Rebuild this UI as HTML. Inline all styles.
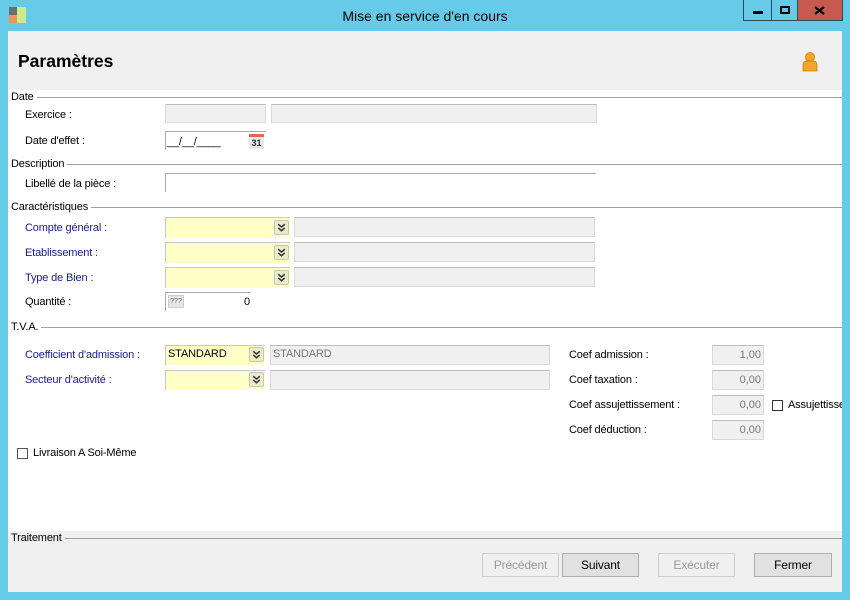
<!DOCTYPE html>
<html><head><meta charset="utf-8"><style>
*{margin:0;padding:0;box-sizing:border-box}
body{width:850px;height:600px;background:#66cbe8;position:relative;overflow:hidden;font-family:"Liberation Sans",sans-serif;font-size:11px;color:#000}
.a{position:absolute}
.l{position:absolute;white-space:nowrap;line-height:13px;letter-spacing:-0.15px}
.blue{color:#1a1a8c}
.sec{position:absolute;left:8px;right:8px;height:1px;background:#a0a0a0}
.lab{position:absolute;left:8px;background:#fff;padding:0 3px;line-height:12px;letter-spacing:-0.15px}
.gray{position:absolute;background:#f0f0f0;border:1px solid #d9d9d9;border-top-color:#bdbdbd}
.yel{position:absolute;background:#ffffc8;border-top:1px solid #c8c8c8;border-left:1px solid #c8c8c8}
.btnd{position:absolute;width:15px;height:15px;background:#eaeacc;border:1px solid #c8c8b0;border-radius:2px}
.val{position:absolute;text-align:right;padding-right:2px;color:#777;line-height:18px}
.btn{position:absolute;top:553px;height:24px;border:1px solid #adadad;background:#e1e1e1;text-align:center;line-height:22px;font-size:12px;letter-spacing:-0.15px}
.dis{color:#9a9a9a;border-color:#cfcfcf;background:#f0f0f0}
.cb{position:absolute;width:11px;height:11px;border:1px solid #333;background:#fff}
</style></head><body>
<svg width="0" height="0" style="position:absolute"><defs><g id="dc"><path d="M3.5 3.5 L7 6.5 L10.5 3.5 M3.5 7.5 L7 10.5 L10.5 7.5" fill="none" stroke="#333" stroke-width="1.6"/></g></defs></svg>
<div class="a" style="left:9px;top:7px;width:8px;height:8px;background:#6d6d6d"></div>
<div class="a" style="left:9px;top:15px;width:8px;height:8px;background:#f59258"></div>
<div class="a" style="left:17px;top:7px;width:9px;height:16px;background:#cfe98b"></div>
<div class="l" style="left:0;width:850px;text-align:center;top:8px;font-size:14px;line-height:17px;letter-spacing:0">Mise en service d'en cours</div>
<div class="a" style="left:743px;top:0;width:29px;height:21px;border:1px solid #2c4b5a;border-top:none"></div>
<div class="a" style="left:753px;top:11px;width:10px;height:3px;background:#000"></div>
<div class="a" style="left:771px;top:0;width:27px;height:21px;border:1px solid #2c4b5a;border-top:none"></div>
<div class="a" style="left:780px;top:6px;width:10px;height:8px;border:2px solid #000"></div>
<div class="a" style="left:797px;top:0;width:46px;height:21px;background:#c75a50;border:1px solid #2c4b5a;border-top:none"></div>
<svg class="a" style="left:814px;top:6px" width="11" height="9"><path d="M1 1 L10 8 M10 1 L1 8" stroke="#000" stroke-width="2.2"/></svg>
<div class="a" style="left:8px;top:31px;width:834px;height:561px;background:#fff"></div>
<div class="a" style="left:8px;top:31px;width:834px;height:59px;background:#f0f0f0"></div>
<div class="l" style="left:18px;top:51px;font-size:17.5px;font-weight:bold;line-height:20px;letter-spacing:0">Paramètres</div>
<svg class="a" style="left:801px;top:51px" width="18" height="22"><circle cx="9" cy="6" r="4.5" fill="#f5a623" stroke="#c77d10" stroke-width=".8"/><path d="M2 20 L2 14 Q2 10 6 10 L12 10 Q16 10 16 14 L16 20 Z" fill="#f5a623" stroke="#c77d10" stroke-width=".8"/></svg>
<div class="a" style="left:8px;top:531px;width:834px;height:61px;background:#f0f0f0"></div>

<div class="sec" style="top:97px"></div><div class="lab" style="top:91px">Date</div>
<div class="sec" style="top:164px"></div><div class="lab" style="top:158px">Description</div>
<div class="sec" style="top:207px"></div><div class="lab" style="top:201px">Caractéristiques</div>
<div class="sec" style="top:327px"></div><div class="lab" style="top:321px">T.V.A.</div>
<div class="sec" style="top:538px"></div><div class="lab" style="top:532px;background:#f0f0f0">Traitement</div>

<div class="l" style="left:25px;top:109px">Exercice :</div>
<div class="gray" style="left:165px;top:104px;width:101px;height:19px"></div>
<div class="gray" style="left:271px;top:104px;width:326px;height:19px"></div>
<div class="l" style="left:25px;top:135px">Date d'effet :</div>
<div class="a" style="left:165px;top:131px;width:101px;height:19px;border-top:1px solid #aaa;border-left:1px solid #aaa"></div>
<div class="l" style="left:167px;top:136px">__/__/____</div>
<div class="a" style="left:249px;top:134px;width:15px;height:15px;background:#e8e8e8;border-top:3px solid #e26a4a;font-size:9px;font-weight:bold;text-align:center;line-height:12px;color:#333">31</div>

<div class="l" style="left:25px;top:178px">Libellé de la pièce :</div>
<div class="a" style="left:165px;top:173px;width:431px;height:19px;border-top:1px solid #aaa;border-left:1px solid #aaa"></div>

<div class="l blue" style="left:25px;top:222px">Compte général :</div>
<div class="yel" style="left:165px;top:217px;width:125px;height:21px"></div><svg class="btnd" style="left:274px;top:220px" viewBox="0 0 14 14"><use href="#dc"/></svg>
<div class="gray" style="left:294px;top:217px;width:301px;height:20px"></div>
<div class="l blue" style="left:25px;top:247px">Etablissement :</div>
<div class="yel" style="left:165px;top:242px;width:125px;height:21px"></div><svg class="btnd" style="left:274px;top:245px" viewBox="0 0 14 14"><use href="#dc"/></svg>
<div class="gray" style="left:294px;top:242px;width:301px;height:20px"></div>
<div class="l blue" style="left:25px;top:272px">Type de Bien :</div>
<div class="yel" style="left:165px;top:267px;width:125px;height:21px"></div><svg class="btnd" style="left:274px;top:270px" viewBox="0 0 14 14"><use href="#dc"/></svg>
<div class="gray" style="left:294px;top:267px;width:301px;height:20px"></div>
<div class="l" style="left:25px;top:296px">Quantité :</div>
<div class="a" style="left:165px;top:292px;width:86px;height:19px;border-top:1px solid #aaa;border-left:1px solid #aaa"></div>
<div class="a" style="left:168px;top:295px;width:16px;height:13px;background:#e6e6e6;border:1px solid #ccc;font-size:7px;text-align:center;line-height:11px;color:#666">???</div>
<div class="l" style="left:244px;top:296px">0</div>

<div class="l blue" style="left:25px;top:349px">Coefficient d'admission :</div>
<div class="yel" style="left:165px;top:345px;width:100px;height:20px"></div><svg class="btnd" style="left:249px;top:347px" viewBox="0 0 14 14"><use href="#dc"/></svg>
<div class="l" style="left:168px;top:348px">STANDARD</div>
<div class="gray" style="left:270px;top:345px;width:280px;height:20px"></div>
<div class="l" style="left:273px;top:348px;color:#777">STANDARD</div>
<div class="l blue" style="left:25px;top:374px">Secteur d'activité :</div>
<div class="yel" style="left:165px;top:370px;width:100px;height:20px"></div><svg class="btnd" style="left:249px;top:372px" viewBox="0 0 14 14"><use href="#dc"/></svg>
<div class="gray" style="left:270px;top:370px;width:280px;height:20px"></div>

<div class="l" style="left:569px;top:349px">Coef admission :</div>
<div class="gray val" style="left:712px;top:345px;width:52px;height:20px">1,00</div>
<div class="l" style="left:569px;top:374px">Coef taxation :</div>
<div class="gray val" style="left:712px;top:370px;width:52px;height:20px">0,00</div>
<div class="l" style="left:569px;top:399px">Coef assujettissement :</div>
<div class="gray val" style="left:712px;top:395px;width:52px;height:20px">0,00</div>
<div class="cb" style="left:772px;top:400px"></div>
<div class="l" style="left:788px;top:399px;width:54px;overflow:hidden">Assujettissement</div>
<div class="l" style="left:569px;top:424px">Coef déduction :</div>
<div class="gray val" style="left:712px;top:420px;width:52px;height:20px">0,00</div>

<div class="cb" style="left:17px;top:448px;border-color:#555"></div>
<div class="l" style="left:33px;top:447px">Livraison A Soi-Même</div>

<div class="btn dis" style="left:482px;width:77px">Précédent</div>
<div class="btn" style="left:562px;width:77px">Suivant</div>
<div class="btn dis" style="left:658px;width:77px">Exécuter</div>
<div class="btn" style="left:754px;width:78px">Fermer</div>
</body></html>
